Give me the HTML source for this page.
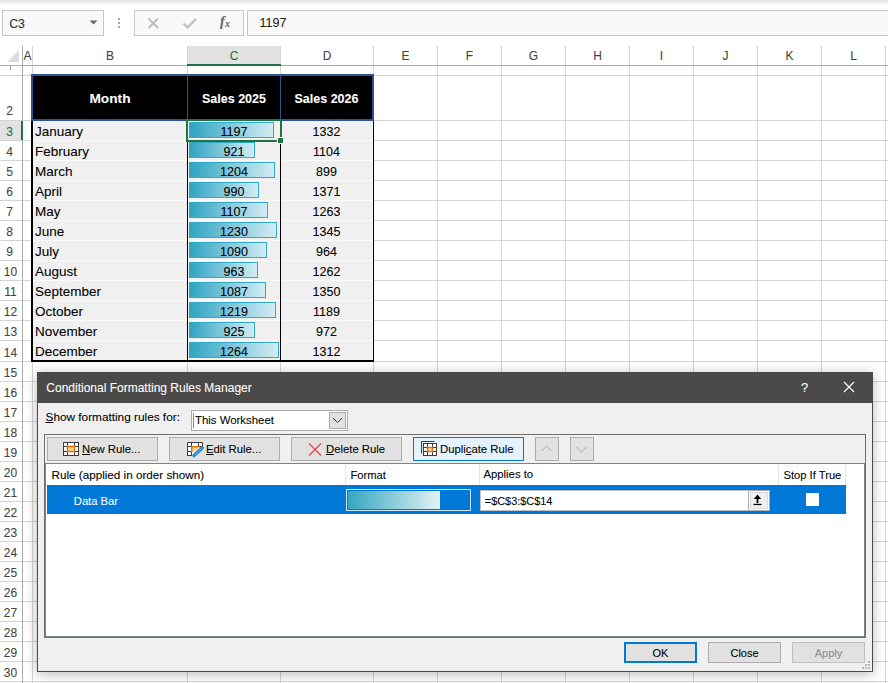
<!DOCTYPE html>
<html><head><meta charset="utf-8"><style>
*{margin:0;padding:0;box-sizing:border-box}
html,body{width:888px;height:683px;overflow:hidden;background:#fff}
body{position:relative;font-family:"Liberation Sans",sans-serif}
.t{position:absolute;white-space:nowrap;-webkit-text-stroke:0.08px currentColor}
.b{position:absolute}
u{text-decoration:underline;text-underline-offset:1px}
</style></head><body>
<div class="b" style="left:0px;top:0px;width:888px;height:6px;background:linear-gradient(#e3e3e3,#ffffff)"></div>
<div class="b" style="left:2px;top:10px;width:102px;height:26px;border:1px solid #c6c6c6;background:#f9f9f9"></div>
<div class="t" style="left:9.3px;top:17.59px;font-size:12.3px;line-height:12.3px;color:#333;letter-spacing:-0.3px">C3</div>
<svg class="b" style="left:89px;top:20px" width="10" height="6"><path d="M0.5 0.5 L8.5 0.5 L4.5 4.5Z" fill="#6a6a6a"/></svg>
<div class="b" style="left:118px;top:18px;width:2px;height:2px;background:#a6a6a6"></div>
<div class="b" style="left:118px;top:22px;width:2px;height:2px;background:#a6a6a6"></div>
<div class="b" style="left:118px;top:26px;width:2px;height:2px;background:#a6a6a6"></div>
<div class="b" style="left:134px;top:10px;width:110px;height:26px;border:1px solid #c6c6c6;background:#f9f9f9"></div>
<svg class="b" style="left:147px;top:17px" width="13" height="13"><path d="M1.5 1.5 L11 11 M11 1.5 L1.5 11" stroke="#bcbcbc" stroke-width="1.9"/></svg>
<svg class="b" style="left:182px;top:17px" width="16" height="13"><path d="M1.5 6.5 L5.5 10.5 L14 2" stroke="#c6c6c6" stroke-width="2.6" fill="none"/></svg>
<div class="t" style="left:220px;top:15.15px;font-size:14px;line-height:14px;color:#666;font-family:'Liberation Serif',serif;font-style:italic;font-weight:bold">f</div>
<div class="t" style="left:225px;top:18.54px;font-size:10px;line-height:10px;color:#666;font-family:'Liberation Serif',serif;font-style:italic;font-weight:bold">x</div>
<div class="b" style="left:247px;top:10px;width:660px;height:26px;border:1px solid #c6c6c6;background:#f9f9f9"></div>
<div class="t" style="left:259.5px;top:17.42px;font-size:12.5px;line-height:12.5px;color:#222;">1197</div>
<div class="b" style="left:187px;top:46px;width:94px;height:19px;background:#e1e1e1"></div>
<div class="b" style="left:187px;top:64px;width:94px;height:2px;background:#217346"></div>
<div class="b" style="left:22px;top:46px;width:1px;height:20px;background:#d4d4d4"></div>
<div class="b" style="left:32px;top:46px;width:1px;height:20px;background:#d4d4d4"></div>
<div class="b" style="left:187px;top:46px;width:1px;height:20px;background:#d4d4d4"></div>
<div class="b" style="left:280px;top:46px;width:1px;height:20px;background:#d4d4d4"></div>
<div class="b" style="left:373px;top:46px;width:1px;height:20px;background:#d4d4d4"></div>
<div class="b" style="left:437px;top:46px;width:1px;height:20px;background:#d4d4d4"></div>
<div class="b" style="left:501px;top:46px;width:1px;height:20px;background:#d4d4d4"></div>
<div class="b" style="left:565px;top:46px;width:1px;height:20px;background:#d4d4d4"></div>
<div class="b" style="left:629px;top:46px;width:1px;height:20px;background:#d4d4d4"></div>
<div class="b" style="left:693px;top:46px;width:1px;height:20px;background:#d4d4d4"></div>
<div class="b" style="left:757px;top:46px;width:1px;height:20px;background:#d4d4d4"></div>
<div class="b" style="left:821px;top:46px;width:1px;height:20px;background:#d4d4d4"></div>
<div class="b" style="left:885px;top:46px;width:1px;height:20px;background:#d4d4d4"></div>
<div class="b" style="left:22px;top:46px;width:1px;height:637px;background:#ababab"></div>
<div class="b" style="left:0px;top:65px;width:888px;height:1px;background:#ababab"></div>
<div class="b" style="left:187px;top:64px;width:94px;height:2px;background:#217346"></div>
<svg class="b" style="left:7px;top:50px" width="13" height="13"><path d="M12 0 L12 12 L0 12Z" fill="#dcdcdc"/></svg>
<div class="t" style="left:23px;width:9px;text-align:center;top:49.84px;font-size:12px;line-height:12px;color:#444;">A</div>
<div class="t" style="left:33px;width:154px;text-align:center;top:49.84px;font-size:12px;line-height:12px;color:#444;">B</div>
<div class="t" style="left:188px;width:92px;text-align:center;top:49.84px;font-size:12px;line-height:12px;color:#217346;">C</div>
<div class="t" style="left:281px;width:92px;text-align:center;top:49.84px;font-size:12px;line-height:12px;color:#444;">D</div>
<div class="t" style="left:374px;width:63px;text-align:center;top:49.84px;font-size:12px;line-height:12px;color:#444;">E</div>
<div class="t" style="left:438px;width:63px;text-align:center;top:49.84px;font-size:12px;line-height:12px;color:#444;">F</div>
<div class="t" style="left:502px;width:63px;text-align:center;top:49.84px;font-size:12px;line-height:12px;color:#444;">G</div>
<div class="t" style="left:566px;width:63px;text-align:center;top:49.84px;font-size:12px;line-height:12px;color:#444;">H</div>
<div class="t" style="left:630px;width:63px;text-align:center;top:49.84px;font-size:12px;line-height:12px;color:#444;">I</div>
<div class="t" style="left:694px;width:63px;text-align:center;top:49.84px;font-size:12px;line-height:12px;color:#444;">J</div>
<div class="t" style="left:758px;width:63px;text-align:center;top:49.84px;font-size:12px;line-height:12px;color:#444;">K</div>
<div class="t" style="left:822px;width:63px;text-align:center;top:49.84px;font-size:12px;line-height:12px;color:#444;">L</div>
<div class="b" style="left:0px;top:75px;width:22px;height:1px;background:#d4d4d4"></div>
<div class="b" style="left:23px;top:75px;width:865px;height:1px;background:#d4d4d4"></div>
<div class="b" style="left:0px;top:120px;width:22px;height:1px;background:#d4d4d4"></div>
<div class="b" style="left:23px;top:120px;width:865px;height:1px;background:#d4d4d4"></div>
<div class="b" style="left:0px;top:140px;width:22px;height:1px;background:#d4d4d4"></div>
<div class="b" style="left:23px;top:140px;width:865px;height:1px;background:#d4d4d4"></div>
<div class="b" style="left:0px;top:160px;width:22px;height:1px;background:#d4d4d4"></div>
<div class="b" style="left:23px;top:160px;width:865px;height:1px;background:#d4d4d4"></div>
<div class="b" style="left:0px;top:180px;width:22px;height:1px;background:#d4d4d4"></div>
<div class="b" style="left:23px;top:180px;width:865px;height:1px;background:#d4d4d4"></div>
<div class="b" style="left:0px;top:200px;width:22px;height:1px;background:#d4d4d4"></div>
<div class="b" style="left:23px;top:200px;width:865px;height:1px;background:#d4d4d4"></div>
<div class="b" style="left:0px;top:220px;width:22px;height:1px;background:#d4d4d4"></div>
<div class="b" style="left:23px;top:220px;width:865px;height:1px;background:#d4d4d4"></div>
<div class="b" style="left:0px;top:240px;width:22px;height:1px;background:#d4d4d4"></div>
<div class="b" style="left:23px;top:240px;width:865px;height:1px;background:#d4d4d4"></div>
<div class="b" style="left:0px;top:260px;width:22px;height:1px;background:#d4d4d4"></div>
<div class="b" style="left:23px;top:260px;width:865px;height:1px;background:#d4d4d4"></div>
<div class="b" style="left:0px;top:280px;width:22px;height:1px;background:#d4d4d4"></div>
<div class="b" style="left:23px;top:280px;width:865px;height:1px;background:#d4d4d4"></div>
<div class="b" style="left:0px;top:300px;width:22px;height:1px;background:#d4d4d4"></div>
<div class="b" style="left:23px;top:300px;width:865px;height:1px;background:#d4d4d4"></div>
<div class="b" style="left:0px;top:320px;width:22px;height:1px;background:#d4d4d4"></div>
<div class="b" style="left:23px;top:320px;width:865px;height:1px;background:#d4d4d4"></div>
<div class="b" style="left:0px;top:340px;width:22px;height:1px;background:#d4d4d4"></div>
<div class="b" style="left:23px;top:340px;width:865px;height:1px;background:#d4d4d4"></div>
<div class="b" style="left:0px;top:361px;width:22px;height:1px;background:#d4d4d4"></div>
<div class="b" style="left:23px;top:361px;width:865px;height:1px;background:#d4d4d4"></div>
<div class="b" style="left:0px;top:381px;width:22px;height:1px;background:#d4d4d4"></div>
<div class="b" style="left:23px;top:381px;width:865px;height:1px;background:#d4d4d4"></div>
<div class="b" style="left:0px;top:401px;width:22px;height:1px;background:#d4d4d4"></div>
<div class="b" style="left:23px;top:401px;width:865px;height:1px;background:#d4d4d4"></div>
<div class="b" style="left:0px;top:421px;width:22px;height:1px;background:#d4d4d4"></div>
<div class="b" style="left:23px;top:421px;width:865px;height:1px;background:#d4d4d4"></div>
<div class="b" style="left:0px;top:441px;width:22px;height:1px;background:#d4d4d4"></div>
<div class="b" style="left:23px;top:441px;width:865px;height:1px;background:#d4d4d4"></div>
<div class="b" style="left:0px;top:461px;width:22px;height:1px;background:#d4d4d4"></div>
<div class="b" style="left:23px;top:461px;width:865px;height:1px;background:#d4d4d4"></div>
<div class="b" style="left:0px;top:481px;width:22px;height:1px;background:#d4d4d4"></div>
<div class="b" style="left:23px;top:481px;width:865px;height:1px;background:#d4d4d4"></div>
<div class="b" style="left:0px;top:501px;width:22px;height:1px;background:#d4d4d4"></div>
<div class="b" style="left:23px;top:501px;width:865px;height:1px;background:#d4d4d4"></div>
<div class="b" style="left:0px;top:521px;width:22px;height:1px;background:#d4d4d4"></div>
<div class="b" style="left:23px;top:521px;width:865px;height:1px;background:#d4d4d4"></div>
<div class="b" style="left:0px;top:541px;width:22px;height:1px;background:#d4d4d4"></div>
<div class="b" style="left:23px;top:541px;width:865px;height:1px;background:#d4d4d4"></div>
<div class="b" style="left:0px;top:561px;width:22px;height:1px;background:#d4d4d4"></div>
<div class="b" style="left:23px;top:561px;width:865px;height:1px;background:#d4d4d4"></div>
<div class="b" style="left:0px;top:581px;width:22px;height:1px;background:#d4d4d4"></div>
<div class="b" style="left:23px;top:581px;width:865px;height:1px;background:#d4d4d4"></div>
<div class="b" style="left:0px;top:601px;width:22px;height:1px;background:#d4d4d4"></div>
<div class="b" style="left:23px;top:601px;width:865px;height:1px;background:#d4d4d4"></div>
<div class="b" style="left:0px;top:621px;width:22px;height:1px;background:#d4d4d4"></div>
<div class="b" style="left:23px;top:621px;width:865px;height:1px;background:#d4d4d4"></div>
<div class="b" style="left:0px;top:641px;width:22px;height:1px;background:#d4d4d4"></div>
<div class="b" style="left:23px;top:641px;width:865px;height:1px;background:#d4d4d4"></div>
<div class="b" style="left:0px;top:661px;width:22px;height:1px;background:#d4d4d4"></div>
<div class="b" style="left:23px;top:661px;width:865px;height:1px;background:#d4d4d4"></div>
<div class="b" style="left:0px;top:681px;width:22px;height:1px;background:#d4d4d4"></div>
<div class="b" style="left:23px;top:681px;width:865px;height:1px;background:#d4d4d4"></div>
<div class="b" style="left:32px;top:66px;width:1px;height:617px;background:#d4d4d4"></div>
<div class="b" style="left:187px;top:66px;width:1px;height:617px;background:#d4d4d4"></div>
<div class="b" style="left:280px;top:66px;width:1px;height:617px;background:#d4d4d4"></div>
<div class="b" style="left:373px;top:66px;width:1px;height:617px;background:#d4d4d4"></div>
<div class="b" style="left:437px;top:66px;width:1px;height:617px;background:#d4d4d4"></div>
<div class="b" style="left:501px;top:66px;width:1px;height:617px;background:#d4d4d4"></div>
<div class="b" style="left:565px;top:66px;width:1px;height:617px;background:#d4d4d4"></div>
<div class="b" style="left:629px;top:66px;width:1px;height:617px;background:#d4d4d4"></div>
<div class="b" style="left:693px;top:66px;width:1px;height:617px;background:#d4d4d4"></div>
<div class="b" style="left:757px;top:66px;width:1px;height:617px;background:#d4d4d4"></div>
<div class="b" style="left:821px;top:66px;width:1px;height:617px;background:#d4d4d4"></div>
<div class="b" style="left:885px;top:66px;width:1px;height:617px;background:#d4d4d4"></div>
<div class="b" style="left:0px;top:121px;width:22px;height:19px;background:#e1e1e1"></div>
<div class="b" style="left:21px;top:121px;width:2px;height:19px;background:#217346"></div>
<div class="t" style="left:0px;width:19px;text-align:center;top:104.84px;font-size:12px;line-height:12px;color:#444;">2</div>
<div class="t" style="left:0px;width:19px;text-align:center;top:125.84px;font-size:12px;line-height:12px;color:#217346;">3</div>
<div class="t" style="left:0px;width:19px;text-align:center;top:145.84px;font-size:12px;line-height:12px;color:#444;">4</div>
<div class="t" style="left:0px;width:19px;text-align:center;top:165.84px;font-size:12px;line-height:12px;color:#444;">5</div>
<div class="t" style="left:0px;width:19px;text-align:center;top:185.84px;font-size:12px;line-height:12px;color:#444;">6</div>
<div class="t" style="left:0px;width:19px;text-align:center;top:205.84px;font-size:12px;line-height:12px;color:#444;">7</div>
<div class="t" style="left:0px;width:19px;text-align:center;top:225.84px;font-size:12px;line-height:12px;color:#444;">8</div>
<div class="t" style="left:0px;width:19px;text-align:center;top:245.84px;font-size:12px;line-height:12px;color:#444;">9</div>
<div class="t" style="left:0px;width:21px;text-align:center;top:265.84px;font-size:12px;line-height:12px;color:#444;">10</div>
<div class="t" style="left:0px;width:21px;text-align:center;top:285.84px;font-size:12px;line-height:12px;color:#444;">11</div>
<div class="t" style="left:0px;width:21px;text-align:center;top:305.84px;font-size:12px;line-height:12px;color:#444;">12</div>
<div class="t" style="left:0px;width:21px;text-align:center;top:325.84px;font-size:12px;line-height:12px;color:#444;">13</div>
<div class="t" style="left:0px;width:21px;text-align:center;top:346.84px;font-size:12px;line-height:12px;color:#444;">14</div>
<div class="t" style="left:0px;width:21px;text-align:center;top:366.84px;font-size:12px;line-height:12px;color:#444;">15</div>
<div class="t" style="left:0px;width:21px;text-align:center;top:386.84px;font-size:12px;line-height:12px;color:#444;">16</div>
<div class="t" style="left:0px;width:21px;text-align:center;top:406.84px;font-size:12px;line-height:12px;color:#444;">17</div>
<div class="t" style="left:0px;width:21px;text-align:center;top:426.84px;font-size:12px;line-height:12px;color:#444;">18</div>
<div class="t" style="left:0px;width:21px;text-align:center;top:446.84px;font-size:12px;line-height:12px;color:#444;">19</div>
<div class="t" style="left:0px;width:21px;text-align:center;top:466.84px;font-size:12px;line-height:12px;color:#444;">20</div>
<div class="t" style="left:0px;width:21px;text-align:center;top:486.84px;font-size:12px;line-height:12px;color:#444;">21</div>
<div class="t" style="left:0px;width:21px;text-align:center;top:506.84px;font-size:12px;line-height:12px;color:#444;">22</div>
<div class="t" style="left:0px;width:21px;text-align:center;top:526.84px;font-size:12px;line-height:12px;color:#444;">23</div>
<div class="t" style="left:0px;width:21px;text-align:center;top:546.84px;font-size:12px;line-height:12px;color:#444;">24</div>
<div class="t" style="left:0px;width:21px;text-align:center;top:566.84px;font-size:12px;line-height:12px;color:#444;">25</div>
<div class="t" style="left:0px;width:21px;text-align:center;top:586.84px;font-size:12px;line-height:12px;color:#444;">26</div>
<div class="t" style="left:0px;width:21px;text-align:center;top:606.84px;font-size:12px;line-height:12px;color:#444;">27</div>
<div class="t" style="left:0px;width:21px;text-align:center;top:626.84px;font-size:12px;line-height:12px;color:#444;">28</div>
<div class="t" style="left:0px;width:21px;text-align:center;top:646.84px;font-size:12px;line-height:12px;color:#444;">29</div>
<div class="t" style="left:0px;width:21px;text-align:center;top:666.84px;font-size:12px;line-height:12px;color:#444;">30</div>
<div class="b" style="left:9.5px;top:66px;width:1.5px;height:4px;background:#98a4b2"></div>
<div class="b" style="left:31px;top:74px;width:343px;height:47px;background:#000;border:2px solid #2f5496"></div>
<div class="b" style="left:187px;top:76px;width:1px;height:44px;background:#2f5496"></div>
<div class="b" style="left:280px;top:76px;width:1px;height:44px;background:#2f5496"></div>
<div class="t" style="left:33px;width:154px;text-align:center;top:92.40px;font-size:13.7px;line-height:13.7px;color:#fff;font-weight:bold;">Month</div>
<div class="t" style="left:188px;width:92px;text-align:center;top:93.42px;font-size:12.5px;line-height:12.5px;color:#fff;font-weight:bold;">Sales 2025</div>
<div class="t" style="left:281px;width:91px;text-align:center;top:93.42px;font-size:12.5px;line-height:12.5px;color:#fff;font-weight:bold;">Sales 2026</div>
<div class="b" style="left:31px;top:121px;width:343px;height:241px;background:#f0f0f0;border-left:2px solid #000;border-right:1px solid #000;border-bottom:2px solid #000"></div>
<div class="b" style="left:372px;top:121px;width:1px;height:239px;background:#fafafa"></div>
<div class="b" style="left:187px;top:121px;width:1px;height:239px;background:#000"></div>
<div class="b" style="left:280px;top:121px;width:1px;height:239px;background:#000"></div>
<div class="b" style="left:189px;top:122px;width:85px;height:16px;border:1px solid #31a9c9;background:linear-gradient(90deg,#2fa4c2,#d3ecf3)"></div>
<div class="t" style="left:35px;top:124.57px;font-size:13.5px;line-height:13.5px;color:#000;">January</div>
<div class="t" style="left:188px;width:92px;text-align:center;top:126.42px;font-size:12.5px;line-height:12.5px;color:#000;">1197</div>
<div class="t" style="left:281px;width:91px;text-align:center;top:126.42px;font-size:12.5px;line-height:12.5px;color:#000;">1332</div>
<div class="b" style="left:33px;top:140px;width:154px;height:1px;background:#fafafa"></div>
<div class="b" style="left:188px;top:140px;width:92px;height:1px;background:#fafafa"></div>
<div class="b" style="left:281px;top:140px;width:91px;height:1px;background:#fafafa"></div>
<div class="b" style="left:189px;top:142px;width:66px;height:16px;border:1px solid #31a9c9;background:linear-gradient(90deg,#2fa4c2,#d3ecf3)"></div>
<div class="t" style="left:35px;top:144.57px;font-size:13.5px;line-height:13.5px;color:#000;">February</div>
<div class="t" style="left:188px;width:92px;text-align:center;top:146.42px;font-size:12.5px;line-height:12.5px;color:#000;">921</div>
<div class="t" style="left:281px;width:91px;text-align:center;top:146.42px;font-size:12.5px;line-height:12.5px;color:#000;">1104</div>
<div class="b" style="left:33px;top:160px;width:154px;height:1px;background:#fafafa"></div>
<div class="b" style="left:188px;top:160px;width:92px;height:1px;background:#fafafa"></div>
<div class="b" style="left:281px;top:160px;width:91px;height:1px;background:#fafafa"></div>
<div class="b" style="left:189px;top:162px;width:86px;height:16px;border:1px solid #31a9c9;background:linear-gradient(90deg,#2fa4c2,#d3ecf3)"></div>
<div class="t" style="left:35px;top:164.57px;font-size:13.5px;line-height:13.5px;color:#000;">March</div>
<div class="t" style="left:188px;width:92px;text-align:center;top:166.42px;font-size:12.5px;line-height:12.5px;color:#000;">1204</div>
<div class="t" style="left:281px;width:91px;text-align:center;top:166.42px;font-size:12.5px;line-height:12.5px;color:#000;">899</div>
<div class="b" style="left:33px;top:180px;width:154px;height:1px;background:#fafafa"></div>
<div class="b" style="left:188px;top:180px;width:92px;height:1px;background:#fafafa"></div>
<div class="b" style="left:281px;top:180px;width:91px;height:1px;background:#fafafa"></div>
<div class="b" style="left:189px;top:182px;width:70px;height:16px;border:1px solid #31a9c9;background:linear-gradient(90deg,#2fa4c2,#d3ecf3)"></div>
<div class="t" style="left:35px;top:184.57px;font-size:13.5px;line-height:13.5px;color:#000;">April</div>
<div class="t" style="left:188px;width:92px;text-align:center;top:186.42px;font-size:12.5px;line-height:12.5px;color:#000;">990</div>
<div class="t" style="left:281px;width:91px;text-align:center;top:186.42px;font-size:12.5px;line-height:12.5px;color:#000;">1371</div>
<div class="b" style="left:33px;top:200px;width:154px;height:1px;background:#fafafa"></div>
<div class="b" style="left:188px;top:200px;width:92px;height:1px;background:#fafafa"></div>
<div class="b" style="left:281px;top:200px;width:91px;height:1px;background:#fafafa"></div>
<div class="b" style="left:189px;top:202px;width:79px;height:16px;border:1px solid #31a9c9;background:linear-gradient(90deg,#2fa4c2,#d3ecf3)"></div>
<div class="t" style="left:35px;top:204.57px;font-size:13.5px;line-height:13.5px;color:#000;">May</div>
<div class="t" style="left:188px;width:92px;text-align:center;top:206.42px;font-size:12.5px;line-height:12.5px;color:#000;">1107</div>
<div class="t" style="left:281px;width:91px;text-align:center;top:206.42px;font-size:12.5px;line-height:12.5px;color:#000;">1263</div>
<div class="b" style="left:33px;top:220px;width:154px;height:1px;background:#fafafa"></div>
<div class="b" style="left:188px;top:220px;width:92px;height:1px;background:#fafafa"></div>
<div class="b" style="left:281px;top:220px;width:91px;height:1px;background:#fafafa"></div>
<div class="b" style="left:189px;top:222px;width:88px;height:16px;border:1px solid #31a9c9;background:linear-gradient(90deg,#2fa4c2,#d3ecf3)"></div>
<div class="t" style="left:35px;top:224.57px;font-size:13.5px;line-height:13.5px;color:#000;">June</div>
<div class="t" style="left:188px;width:92px;text-align:center;top:226.42px;font-size:12.5px;line-height:12.5px;color:#000;">1230</div>
<div class="t" style="left:281px;width:91px;text-align:center;top:226.42px;font-size:12.5px;line-height:12.5px;color:#000;">1345</div>
<div class="b" style="left:33px;top:240px;width:154px;height:1px;background:#fafafa"></div>
<div class="b" style="left:188px;top:240px;width:92px;height:1px;background:#fafafa"></div>
<div class="b" style="left:281px;top:240px;width:91px;height:1px;background:#fafafa"></div>
<div class="b" style="left:189px;top:242px;width:78px;height:16px;border:1px solid #31a9c9;background:linear-gradient(90deg,#2fa4c2,#d3ecf3)"></div>
<div class="t" style="left:35px;top:244.57px;font-size:13.5px;line-height:13.5px;color:#000;">July</div>
<div class="t" style="left:188px;width:92px;text-align:center;top:246.42px;font-size:12.5px;line-height:12.5px;color:#000;">1090</div>
<div class="t" style="left:281px;width:91px;text-align:center;top:246.42px;font-size:12.5px;line-height:12.5px;color:#000;">964</div>
<div class="b" style="left:33px;top:260px;width:154px;height:1px;background:#fafafa"></div>
<div class="b" style="left:188px;top:260px;width:92px;height:1px;background:#fafafa"></div>
<div class="b" style="left:281px;top:260px;width:91px;height:1px;background:#fafafa"></div>
<div class="b" style="left:189px;top:262px;width:69px;height:16px;border:1px solid #31a9c9;background:linear-gradient(90deg,#2fa4c2,#d3ecf3)"></div>
<div class="t" style="left:35px;top:264.57px;font-size:13.5px;line-height:13.5px;color:#000;">August</div>
<div class="t" style="left:188px;width:92px;text-align:center;top:266.42px;font-size:12.5px;line-height:12.5px;color:#000;">963</div>
<div class="t" style="left:281px;width:91px;text-align:center;top:266.42px;font-size:12.5px;line-height:12.5px;color:#000;">1262</div>
<div class="b" style="left:33px;top:280px;width:154px;height:1px;background:#fafafa"></div>
<div class="b" style="left:188px;top:280px;width:92px;height:1px;background:#fafafa"></div>
<div class="b" style="left:281px;top:280px;width:91px;height:1px;background:#fafafa"></div>
<div class="b" style="left:189px;top:282px;width:77px;height:16px;border:1px solid #31a9c9;background:linear-gradient(90deg,#2fa4c2,#d3ecf3)"></div>
<div class="t" style="left:35px;top:284.57px;font-size:13.5px;line-height:13.5px;color:#000;">September</div>
<div class="t" style="left:188px;width:92px;text-align:center;top:286.42px;font-size:12.5px;line-height:12.5px;color:#000;">1087</div>
<div class="t" style="left:281px;width:91px;text-align:center;top:286.42px;font-size:12.5px;line-height:12.5px;color:#000;">1350</div>
<div class="b" style="left:33px;top:300px;width:154px;height:1px;background:#fafafa"></div>
<div class="b" style="left:188px;top:300px;width:92px;height:1px;background:#fafafa"></div>
<div class="b" style="left:281px;top:300px;width:91px;height:1px;background:#fafafa"></div>
<div class="b" style="left:189px;top:302px;width:87px;height:16px;border:1px solid #31a9c9;background:linear-gradient(90deg,#2fa4c2,#d3ecf3)"></div>
<div class="t" style="left:35px;top:304.57px;font-size:13.5px;line-height:13.5px;color:#000;">October</div>
<div class="t" style="left:188px;width:92px;text-align:center;top:306.42px;font-size:12.5px;line-height:12.5px;color:#000;">1219</div>
<div class="t" style="left:281px;width:91px;text-align:center;top:306.42px;font-size:12.5px;line-height:12.5px;color:#000;">1189</div>
<div class="b" style="left:33px;top:320px;width:154px;height:1px;background:#fafafa"></div>
<div class="b" style="left:188px;top:320px;width:92px;height:1px;background:#fafafa"></div>
<div class="b" style="left:281px;top:320px;width:91px;height:1px;background:#fafafa"></div>
<div class="b" style="left:189px;top:322px;width:66px;height:16px;border:1px solid #31a9c9;background:linear-gradient(90deg,#2fa4c2,#d3ecf3)"></div>
<div class="t" style="left:35px;top:324.57px;font-size:13.5px;line-height:13.5px;color:#000;">November</div>
<div class="t" style="left:188px;width:92px;text-align:center;top:326.42px;font-size:12.5px;line-height:12.5px;color:#000;">925</div>
<div class="t" style="left:281px;width:91px;text-align:center;top:326.42px;font-size:12.5px;line-height:12.5px;color:#000;">972</div>
<div class="b" style="left:33px;top:340px;width:154px;height:1px;background:#fafafa"></div>
<div class="b" style="left:188px;top:340px;width:92px;height:1px;background:#fafafa"></div>
<div class="b" style="left:281px;top:340px;width:91px;height:1px;background:#fafafa"></div>
<div class="b" style="left:189px;top:342px;width:90px;height:16px;border:1px solid #31a9c9;background:linear-gradient(90deg,#2fa4c2,#d3ecf3)"></div>
<div class="t" style="left:35px;top:344.57px;font-size:13.5px;line-height:13.5px;color:#000;">December</div>
<div class="t" style="left:188px;width:92px;text-align:center;top:346.42px;font-size:12.5px;line-height:12.5px;color:#000;">1264</div>
<div class="t" style="left:281px;width:91px;text-align:center;top:346.42px;font-size:12.5px;line-height:12.5px;color:#000;">1312</div>
<div class="b" style="left:186px;top:119px;width:96px;height:23px;border:2px solid #217346"></div>
<div class="b" style="left:277px;top:137px;width:7px;height:7px;background:#217346;border:1px solid #fff"></div>
<div class="b" style="left:37px;top:372px;width:836px;height:300px;box-shadow:0 2px 12px rgba(0,0,0,0.28)"></div>
<div class="b" style="left:37px;top:372px;width:836px;height:300px;background:#f0f0f0;border:1px solid #4b4a48"></div>
<div class="b" style="left:37px;top:372px;width:836px;height:31px;background:#4b4a48"></div>
<div class="t" style="left:46.3px;top:381.84px;font-size:12px;line-height:12px;color:#fff;">Conditional Formatting Rules Manager</div>
<div class="t" style="left:801px;top:381.00px;font-size:13px;line-height:13px;color:#fff;">?</div>
<svg class="b" style="left:843px;top:381px" width="12" height="12"><path d="M1 1 L11 11 M11 1 L1 11" stroke="#fff" stroke-width="1.2"/></svg>
<div class="t" style="left:45.5px;top:411.51px;font-size:11.8px;line-height:11.8px;color:#000;"><u>S</u>how formatting rules for:</div>
<div class="b" style="left:191px;top:410px;width:157px;height:21px;background:#fff;border:1px solid #adadad"></div>
<div class="b" style="left:193px;top:413px;width:1px;height:15px;background:#5b9bd5"></div>
<div class="t" style="left:195px;top:415.15px;font-size:11.4px;line-height:11.4px;color:#000;">This Worksheet</div>
<div class="b" style="left:329px;top:412px;width:17px;height:17px;background:#e1e1e1;border:1px solid #adadad"></div>
<svg class="b" style="left:332px;top:417px" width="11" height="7"><path d="M1 1 L5.5 5.5 L10 1" stroke="#333" stroke-width="1" fill="none"/></svg>
<div class="b" style="left:44px;top:434px;width:822px;height:204px;background:#f0f0f0;border:1px solid #6e6e6e"></div>
<div class="b" style="left:47px;top:437px;width:111px;height:24px;background:#e1e1e1;border:1px solid #adadad"></div>
<div class="t" style="left:82px;top:444.43px;font-size:11.3px;line-height:11.3px;color:#000;"><u>N</u>ew Rule...</div>
<svg class="b" style="left:63px;top:442px" width="17" height="15"><rect x="0.5" y="0.5" width="15" height="13" fill="#fff" stroke="#3c3c3c"/><path d="M4.5 0.5V13.5M11.5 0.5V13.5M0.5 4.5H15.5M0.5 9.5H15.5" stroke="#3c3c3c"/><rect x="4.5" y="4.5" width="7" height="5" fill="#fdd99b" stroke="#e8720c" stroke-width="1.5"/></svg>
<div class="b" style="left:169px;top:437px;width:111px;height:24px;background:#e1e1e1;border:1px solid #adadad"></div>
<div class="t" style="left:206px;top:444.43px;font-size:11.3px;line-height:11.3px;color:#000;"><u>E</u>dit Rule...</div>
<svg class="b" style="left:187px;top:442px" width="18" height="16"><path d="M0.5 0.5H15.5V4.5H12L5 13.5H0.5Z" fill="#fff"/><path d="M0.5 14V0.5H15.5V4M4.5 0V14M11.5 0V4.5M0 4.5H4.5M11.5 4.5H15.5M0 9.5H4.5M0 13.5H5" stroke="#3c3c3c" fill="none"/><rect x="5" y="5" width="6.5" height="4.5" fill="#fdd99b"/><path d="M4.8 10V4.8H12" stroke="#e8720c" stroke-width="1.6" fill="none"/><path d="M7 13.6 L15.2 6" stroke="#2b88d8" stroke-width="3.4" stroke-linecap="round"/><path d="M8.6 12.1 L14.3 6.9" stroke="#bfe0f7" stroke-width="0.9" stroke-dasharray="1 1.2"/></svg>
<div class="b" style="left:291px;top:437px;width:111px;height:24px;background:#e1e1e1;border:1px solid #adadad"></div>
<div class="t" style="left:326px;top:444.43px;font-size:11.3px;line-height:11.3px;color:#000;"><u>D</u>elete Rule</div>
<svg class="b" style="left:308px;top:443px" width="14" height="13"><path d="M1 0.5 L13 12.5 M13 0.5 L1 12.5" stroke="#e84a4a" stroke-width="1.3"/></svg>
<div class="b" style="left:413px;top:437px;width:111px;height:24px;background:#e5f1fb;border:1px solid #0078d7"></div>
<div class="t" style="left:440px;top:444.43px;font-size:11.3px;line-height:11.3px;color:#000;">Dupli<u>c</u>ate Rule</div>
<svg class="b" style="left:421px;top:441px" width="17" height="16"><path d="M0.5 12.5V0.5H13.5" stroke="#3c3c3c" fill="none"/><rect x="2.5" y="2.5" width="13" height="12" fill="#fff" stroke="#3c3c3c"/><path d="M6.5 2.5V14.5M11.5 2.5V14.5M2.5 6.5H15.5M2.5 10.5H15.5" stroke="#3c3c3c"/><rect x="6.5" y="6.5" width="5" height="4" fill="#fdd99b" stroke="#e8720c" stroke-width="1.5"/></svg>
<div class="b" style="left:535px;top:437px;width:24px;height:24px;background:#e1e1e1;border:1px solid #adadad"></div>
<svg class="b" style="left:541px;top:445px" width="12" height="7"><path d="M0.5 6 L5.5 1 L10.5 6" stroke="#a6a6a6" stroke-width="1" fill="none"/></svg>
<div class="b" style="left:570px;top:437px;width:24px;height:24px;background:#e1e1e1;border:1px solid #adadad"></div>
<svg class="b" style="left:576px;top:446px" width="12" height="7"><path d="M0.5 1 L5.5 6 L10.5 1" stroke="#a6a6a6" stroke-width="1" fill="none"/></svg>
<div class="b" style="left:45px;top:463px;width:820px;height:174px;background:#fff;border:1px solid #7d8189"></div>
<div class="b" style="left:345px;top:464px;width:1px;height:21px;background:#e5e5e5"></div>
<div class="b" style="left:479px;top:464px;width:1px;height:21px;background:#e5e5e5"></div>
<div class="b" style="left:778px;top:464px;width:1px;height:21px;background:#e5e5e5"></div>
<div class="b" style="left:845px;top:464px;width:1px;height:21px;background:#e5e5e5"></div>
<div class="t" style="left:51.5px;top:469.10px;font-size:11.7px;line-height:11.7px;color:#000;">Rule (applied in order shown)</div>
<div class="t" style="left:350.5px;top:469.52px;font-size:11.2px;line-height:11.2px;color:#000;">Format</div>
<div class="t" style="left:483.5px;top:469.43px;font-size:11.3px;line-height:11.3px;color:#000;">Applies to</div>
<div class="t" style="left:783.5px;top:469.52px;font-size:11.2px;line-height:11.2px;color:#000;">Stop If True</div>
<div class="b" style="left:47px;top:485px;width:799px;height:29px;background:#0078d7"></div>
<div class="t" style="left:73.8px;top:495.52px;font-size:11.2px;line-height:11.2px;color:#fff;">Data Bar</div>
<div class="b" style="left:346px;top:489px;width:125px;height:22px;border:1px solid #cde4f7"></div>
<div class="b" style="left:348px;top:491px;width:92px;height:18px;background:linear-gradient(90deg,#35a6bf,#e3f2f6)"></div>
<div class="b" style="left:480px;top:490px;width:290px;height:21px;background:#fff;border:1px solid #c0c0c0"></div>
<div class="t" style="left:484.8px;top:495.77px;font-size:10.9px;line-height:10.9px;color:#000;">=$C$3:$C$14</div>
<div class="b" style="left:748px;top:490px;width:22px;height:21px;background:#f0f0f0;border:1px solid #adadad;box-shadow:inset 0 0 0 1px #fff, inset 0 0 0 2px #dcdcdc"></div>
<svg class="b" style="left:753px;top:494px" width="11" height="12"><path d="M4.5 0.5 L0.8 5 H3.6 V9 H5.4 V5 H8.2Z" fill="#000"/><rect x="0.5" y="9.8" width="8" height="1.3" fill="#000"/></svg>
<div class="b" style="left:806px;top:493px;width:13px;height:13px;background:#fff"></div>
<div class="b" style="left:624px;top:642px;width:73px;height:21px;background:#e1e1e1;border:2px solid #0078d7"></div>
<div class="t" style="left:624px;width:73px;text-align:center;top:647.69px;font-size:11px;line-height:11px;color:#000;">OK</div>
<div class="b" style="left:708px;top:642px;width:73px;height:21px;background:#e1e1e1;border:1px solid #adadad"></div>
<div class="t" style="left:708px;width:73px;text-align:center;top:647.69px;font-size:11px;line-height:11px;color:#000;">Close</div>
<div class="b" style="left:792px;top:642px;width:73px;height:21px;background:#e1e1e1;border:1px solid #bfbfbf"></div>
<div class="t" style="left:792px;width:73px;text-align:center;top:647.69px;font-size:11px;line-height:11px;color:#8d8d8d;">Apply</div>
<div class="b" style="left:868px;top:661px;width:2px;height:2px;background:#b4b4b4"></div>
<div class="b" style="left:865px;top:664px;width:2px;height:2px;background:#b4b4b4"></div>
<div class="b" style="left:868px;top:664px;width:2px;height:2px;background:#b4b4b4"></div>
<div class="b" style="left:862px;top:667px;width:2px;height:2px;background:#b4b4b4"></div>
<div class="b" style="left:865px;top:667px;width:2px;height:2px;background:#b4b4b4"></div>
<div class="b" style="left:868px;top:667px;width:2px;height:2px;background:#b4b4b4"></div>
</body></html>
